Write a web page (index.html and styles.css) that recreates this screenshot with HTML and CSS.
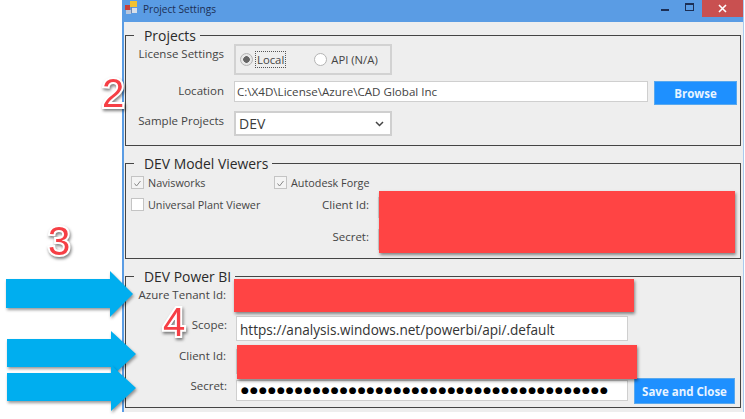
FILE: index.html
```html
<!DOCTYPE html>
<html lang="en">
<head>
<meta charset="utf-8">
<title>Project Settings</title>
<link rel="stylesheet" href="styles.css">
</head>
<body>
<div class="stage">
  <main class="window">
    <header class="titlebar">
      <svg class="app-icon" width="13" height="13" viewBox="0 0 13 13"><rect x="0" y="4" width="5" height="5" fill="#c8403a"/><rect x="5" y="0" width="7" height="6" fill="#f2c230"/><rect x="1" y="9" width="5" height="4" fill="#b9c6dc"/><rect x="7" y="7" width="5" height="5" fill="#d8dfe9"/><rect x="6" y="6" width="1" height="6" fill="#6f86ad"/></svg>
      <span class="title">Project Settings</span>
      <div class="controls">
        <span class="ctl-min"></span>
        <span class="ctl-max"></span>
        <span class="ctl-close"><svg width="9" height="9" viewBox="0 0 9 9"><path d="M1 1l7 7M8 1l-7 7" stroke="#fff" stroke-width="1.6" fill="none"/></svg></span>
      </div>
    </header>
    <div class="content">
      <section class="group group-projects">
        <div class="legend">Projects</div>
        <div class="row row-license">
          <span class="label label-up">License Settings</span>
          <div class="radio-box">
            <span class="radio radio-on"></span><span class="radio-text focus">Local</span>
            <span class="radio radio-off"></span><span class="radio-text">API (N/A)</span>
          </div>
        </div>
        <div class="row row-location">
          <span class="label">Location</span>
          <div class="field field-location">C:\X4D\License\Azure\CAD Global Inc</div>
          <div class="btn btn-browse">Browse</div>
        </div>
        <div class="row row-sample">
          <span class="label label-up">Sample Projects</span>
          <div class="field field-select">DEV
            <svg width="9" height="6" viewBox="0 0 9 6"><path d="M1 1l3.5 3.5L8 1" stroke="#444" stroke-width="1.5" fill="none"/></svg>
          </div>
        </div>
      </section>

      <section class="group group-viewers">
        <div class="legend">DEV Model Viewers</div>
        <div class="viewer-grid">
          <label class="check"><span class="box"><svg width="11" height="11" viewBox="0 0 11 11"><path d="M2.5 5.5l2 2.5 4-5" stroke="#888" stroke-width="1" fill="none"/></svg></span>Navisworks</label>
          <label class="check check-forge"><span class="box"><svg width="11" height="11" viewBox="0 0 11 11"><path d="M2.5 5.5l2 2.5 4-5" stroke="#888" stroke-width="1" fill="none"/></svg></span>Autodesk Forge</label>
          <label class="check check-upv"><span class="box"></span>Universal Plant Viewer</label>
          <span class="side-label">Client Id:</span>
          <div class="field field-plain"></div>
          <span class="side-label side-secret">Secret:</span>
          <div class="field field-plain field-secret"></div>
        </div>
      </section>

      <section class="group group-bi">
        <div class="legend">DEV Power BI</div>
        <div class="bi-rows">
          <div class="bi-row"><span class="label label-bi">Azure Tenant Id:</span><div class="field field-bi"></div></div>
          <div class="bi-row"><span class="label label-bi label-scope">Scope:</span><div class="field field-bi">https://analysis.windows.net/powerbi/api/.default</div></div>
          <div class="bi-row"><span class="label label-bi label-client">Client Id:</span><div class="field field-bi"></div></div>
          <div class="bi-row bi-row-secret"><span class="label label-bi label-secret">Secret:</span><div class="field field-bi field-dots">●●●●●●●●●●●●●●●●●●●●●●●●●●●●●●●●●●●●●●●●●</div><div class="btn btn-save">Save and Close</div></div>
        </div>
      </section>
    </div>
  </main>

  <div class="redact r1"></div>
  <div class="redact r2"></div>
  <div class="redact r3"></div>

  <svg class="arrow a1" width="130" height="46" viewBox="0 0 130 46"><path d="M0 8H104V0L127 23L104 46V37H0Z"/></svg>
  <svg class="arrow a2" width="130" height="46" viewBox="0 0 130 46"><path d="M0 8H104V0L129 23L104 46V36H0Z"/></svg>
  <svg class="arrow a3" width="130" height="46" viewBox="0 0 130 46"><path d="M0 8H104V0L129 23L104 46V36H0Z"/></svg>

  <span class="num n2">2</span>
  <span class="num n3">3</span>
  <span class="num n4">4</span>
</div>
</body>
</html>
```
FILE: styles.css
```css
* { box-sizing: border-box; }
html, body { margin: 0; padding: 0; background: #fff; }
body { width: 745px; height: 419px; overflow: hidden; font-family: "Open Sans", "Noto Sans", sans-serif; color: #444; }

.stage { position: relative; width: 745px; height: 419px; padding-left: 122px; filter: blur(0.35px); }

.window { width: 622px; height: 412px; background: #eeeeee; border-left: 2px solid #5a9ce4; border-right: 1px solid #a9c9ee; display: flex; flex-direction: column; }

.titlebar { height: 22px; flex: none; background: #5a9ce4; display: flex; align-items: flex-start; padding-left: 1px; }
.app-icon { margin-top: 1px; }
.title { margin: 1px 0 0 5px; font-size: 10.1px; line-height: 16px; color: #1c2f55; }
.controls { margin-left: auto; display: flex; height: 17px; }
.ctl-min { width: 8px; height: 2px; margin: 9px 16px 0 0; background: #1c2f55; }
.ctl-max { width: 9px; height: 8px; margin: 3px 8px 0 0; border: 1px solid #1c2f55; border-top-width: 2px; }
.ctl-close { width: 41px; height: 17px; background: #c95050; display: flex; align-items: center; justify-content: center; }

.content { padding: 13px 2px 0 1px; display: flex; flex-direction: column; gap: 17px; }

.group { border: 1px solid #444; display: flex; flex-direction: column; }
.group-projects { height: 111px; }
.group-viewers { height: 96px; }
.group-bi { height: 132px; }

.legend { width: fit-content; height: 18px; margin: -10px 0 0 8px; padding: 0 4px 0 10px; background: #eee; font-size: 13.9px; line-height: 20px; color: #2a2a2a; }

.row { display: flex; align-items: flex-start; }
.row-location { margin-top: 6px; }
.row-sample { margin-top: 6px; }

.label { width: 98px; flex: none; text-align: right; font-size: 11.5px; line-height: 16px; white-space: nowrap; color: #444; }
.row-location .label { padding-top: 2px; }
.label-up { padding-top: 2px; }

.radio-box { width: 158px; height: 31px; margin-left: 10px; border: 2px solid #d2d2d2; display: flex; align-items: center; font-size: 11.3px; color: #444; padding-left: 4px; }
.radio { width: 13px; height: 13px; border-radius: 50%; border: 1px solid #b4b4b4; background: #fff; flex: none; }
.radio-on { background: radial-gradient(circle, #666 0 3px, #e8e8e8 3.6px); margin-right: 3px; }
.radio-off { margin-left: 29px; margin-right: 4px; }
.radio-text { line-height: 15px; }
.focus { outline: 1px dotted #555; outline-offset: 0; padding: 0 1px; }

.field { background: #fff; border: 1px solid #cfcfcf; white-space: nowrap; overflow: hidden; }
.field-location { width: 414px; height: 21px; margin-left: 10px; padding-left: 2px; font-size: 11.6px; line-height: 19px; }
.field-select { width: 158px; height: 25px; margin-left: 10px; padding: 0 6px 0 3px; font-size: 14px; line-height: 24px; color: #3c3c3c; display: flex; align-items: center; justify-content: space-between; border-width: 2px; }

.btn { background: #1e90ff; color: #e8f4ff; font-weight: 700; display: flex; align-items: center; justify-content: center; border: 1px solid #58a8ee; }
.btn-browse { width: 83px; height: 24px; margin-left: 6px; font-size: 11.5px; }

.viewer-grid { display: grid; grid-template-columns: 143px 95px 356px; grid-template-rows: 15px 28px 32px; padding-left: 5px; margin-top: 3px; }
.check { display: flex; align-items: center; font-size: 10.8px; color: #444; height: 15px; white-space: nowrap; }
.check-forge { grid-column: 2 / 4; }
.box { width: 13px; height: 13px; border: 1px solid #c4c4c4; background: #f4f4f4; margin-right: 4px; flex: none; display: block; }
.check-upv { margin-top: 7px; grid-row: 2; grid-column: 1; }
.check-upv .box { background: #fff; }
.side-label { grid-column: 2; grid-row: 2; text-align: right; font-size: 11.5px; line-height: 16px; margin-top: 7px; white-space: nowrap; }
.field-plain { grid-column: 3; grid-row: 2; margin: 7px 0 0 9px; height: 21px; width: 347px; }
.side-secret { grid-row: 3; margin-top: 11px; }
.field-secret { grid-row: 3; margin-top: 11px; }

.bi-rows { display: flex; flex-direction: column; gap: 8px; margin-top: -2px; }
.bi-row { display: flex; align-items: flex-start; height: 25px; }
.label-bi { width: 100px; padding-top: 4px; }
.label-scope { width: 101px; margin-right: -1px; padding-top: 1px; }
.label-client { padding-top: 0; margin-top: -1px; }
.label-secret { width: 101px; margin-right: -1px; padding-top: 0; margin-top: -2px; }
.field-bi { width: 392px; height: 25px; margin-left: 10px; padding-left: 3px; font-size: 13.6px; line-height: 25px; color: #333; }
.bi-row-secret { margin-top: -2px; height: 26px; }
.field-dots { height: 21px; padding-left: 4px; font-family: "DejaVu Sans", sans-serif; font-size: 9px; letter-spacing: 1.12px; line-height: 19px; color: #000; }
.btn-save { width: 101px; height: 26px; margin: -2px 0 0 6px; font-size: 11.5px; }

.redact { position: absolute; background: #ff4444; box-shadow: 1px 2px 3px rgba(0,0,0,.45); }
.r1 { left: 379px; top: 191px; width: 356px; height: 62px; }
.r2 { left: 234px; top: 279px; width: 400px; height: 33px; }
.r3 { left: 237px; top: 345px; width: 400px; height: 34px; }

.arrow { position: absolute; overflow: visible; filter: drop-shadow(1px 2px 1.5px rgba(0,0,0,.4)); }
.arrow path { fill: #00aeef; }
.a1 { left: 6px; top: 271px; }
.a2 { left: 7px; top: 331px; }
.a3 { left: 7px; top: 365px; }

.num { position: absolute; font-family: "Liberation Sans", sans-serif; font-size: 40px; line-height: 40px; color: #f63f45; -webkit-text-stroke: 4px #fff; paint-order: stroke fill; filter: drop-shadow(1px 2px 1.5px rgba(0,0,0,.5)); }
.n2 { left: 102px; top: 73px; }
.n3 { left: 48px; top: 221px; }
.n4 { left: 163px; top: 302px; }
```
